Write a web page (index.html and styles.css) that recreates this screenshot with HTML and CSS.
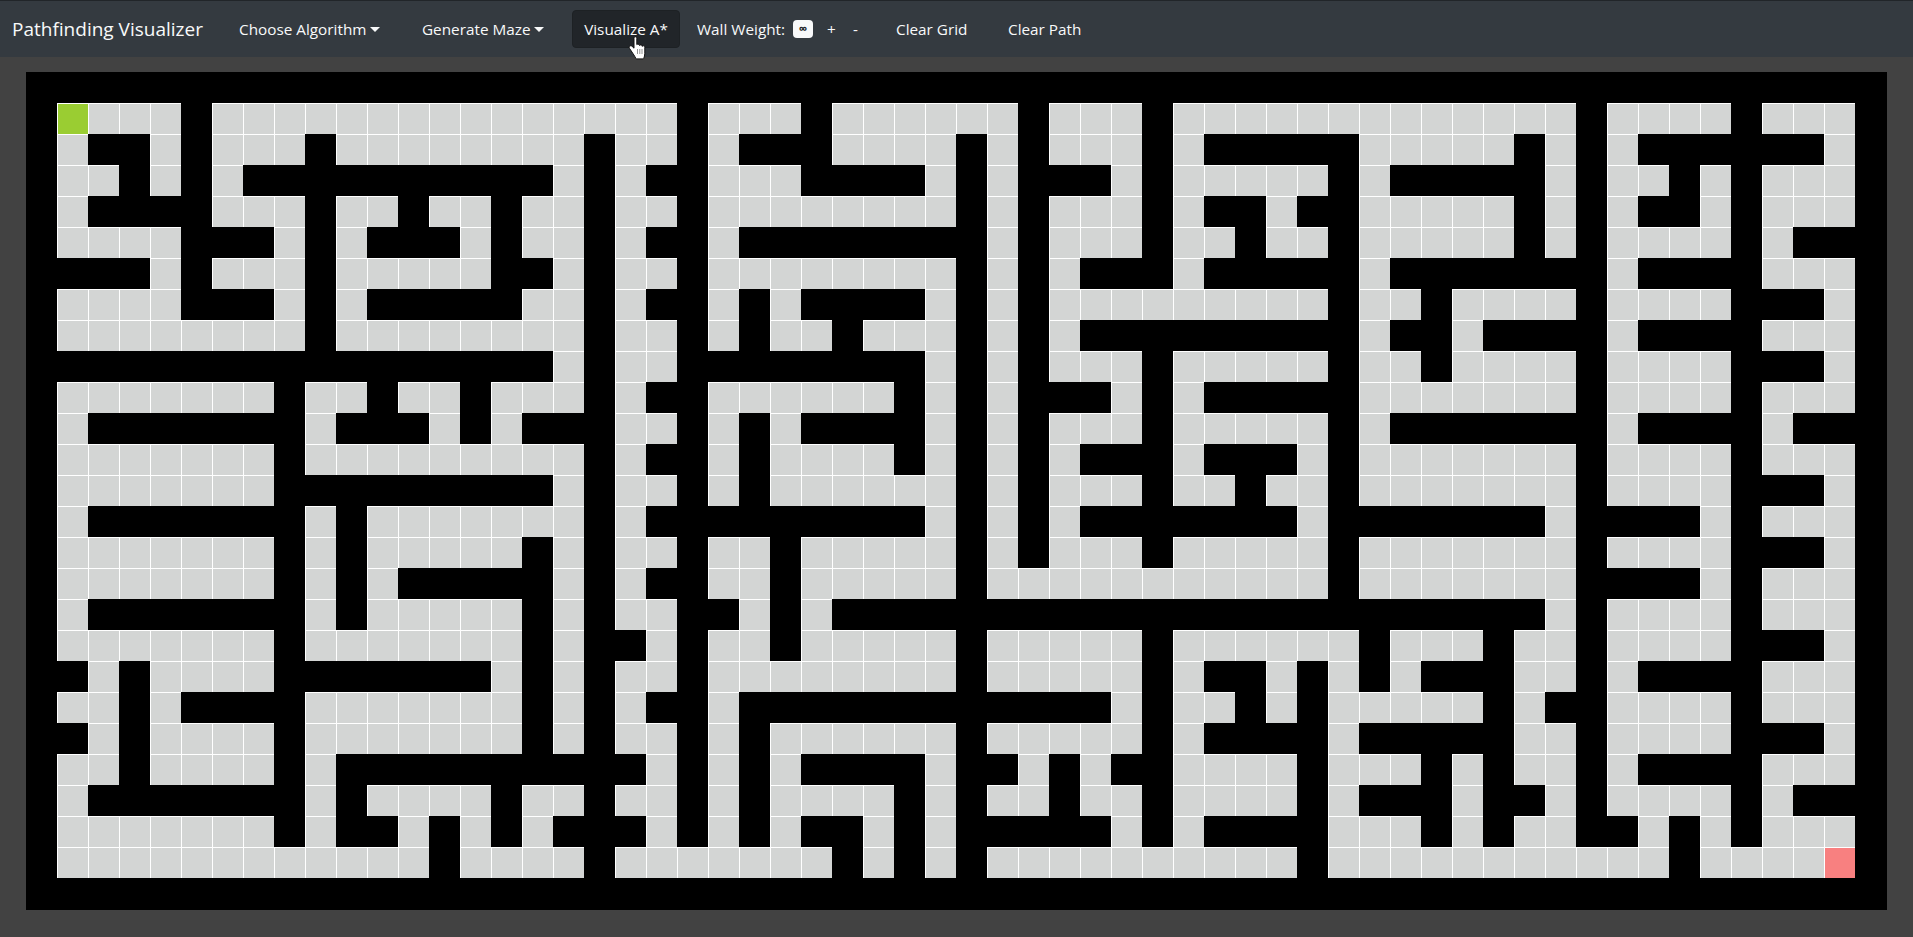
FILE: index.html
```html
<!DOCTYPE html>
<html lang="en">
<head>
    <meta charset="UTF-8">
    <meta name="viewport" content="width=device-width, initial-scale=1.0">
    <title>Pathfinding Visualizer</title>
    <link rel="stylesheet" href="styles.css">
</head>
<body>
    <nav class="navbar">
        <a class="brand" href="#">Pathfinding Visualizer</a>
        <a class="nav-link algo" href="#">Choose Algorithm<span class="caret"></span></a>
        <a class="nav-link maze" href="#">Generate Maze<span class="caret"></span></a>
        <button class="visualize">Visualize A*</button>
        <span class="nav-text weight">Wall Weight:</span>
        <span class="badge">∞</span>
        <a class="nav-link plus" href="#">+</a>
        <a class="nav-link minus" href="#">-</a>
        <a class="nav-link clear-grid" href="#">Clear Grid</a>
        <a class="nav-link clear-path" href="#">Clear Path</a>
    </nav>
    <svg class="pointer" width="18" height="24" viewBox="0 0 18 24">
        <path d="M7.5.7c-.9 0-1.5.7-1.5 1.6v9.9l-1.8-1.8c-.8-.8-1.9-.8-2.6-.1-.6.6-.5 1.5 0 2.2l3.6 5.4c1 1.6 2 3 2.6 4.4.1.4.4.6.8.6h6.4c.4 0 .7-.3.8-.6.5-1.4 1-3 1-5v-6c0-.9-.6-1.5-1.4-1.5-.5 0-.9.2-1.2.6 0-.9-.7-1.5-1.5-1.5-.5 0-1 .2-1.2.6-.1-.8-.7-1.4-1.5-1.4-.5 0-.9.2-1.2.5V2.3c0-.9-.6-1.6-1.5-1.6z" fill="#fff" stroke="#111" stroke-width="1"/>
        <path d="M9.5 13v5M11.8 13v5M14 13v5" fill="none" stroke="#666" stroke-width=".7"/>
    </svg>
    <main class="board">
        <div class="grid" id="grid"></div>
    </main>
    <script src="script.js"></script>
</body>
</html>
```

FILE: styles.css
```css
* {
    box-sizing: border-box;
}
html, body {
    height: 100%;
}
body {
    margin: 0;
    background-color: #424242;
    font-family: "Open Sans", "Noto Sans", sans-serif;
    font-size: 15.3px;
    overflow: hidden;
}
.navbar {
    display: flex;
    align-items: center;
    height: 57px;
    padding-left: 12px;
    background-color: #343a40;
    border-top: 1px solid #212529;
    color: #f8f9fa;
}
.navbar a {
    color: #f8f9fa;
    text-decoration: none;
    white-space: nowrap;
}
.brand {
    width: 227px;
    font-size: 19px;
}
.nav-link {
    display: block;
}
.algo {
    width: 183px;
}
.maze {
    width: 150px;
}
.caret {
    display: inline-block;
    margin-left: 4px;
    vertical-align: 3px;
    border-top: 5px solid #f8f9fa;
    border-right: 5px solid transparent;
    border-left: 5px solid transparent;
}
.visualize {
    width: 108px;
    height: 38px;
    padding: 0;
    font: inherit;
    color: #f8f9fa;
    background-color: #212529;
    border: 1px solid #1d2124;
    border-radius: 4px;
}
.weight {
    width: 96px;
    margin-left: 17px;
}
.badge {
    width: 20px;
    height: 18px;
    font-size: 12px;
    font-weight: 700;
    line-height: 18px;
    text-align: center;
    color: #212529;
    background-color: #f8f9fa;
    border-radius: 4px;
}
.plus {
    width: 26px;
    margin-left: 14px;
}
.minus {
    width: 43px;
}
.clear-grid {
    width: 112px;
}
.board {
    padding: 15px 26px 0;
}
.grid {
    display: grid;
    grid-template-columns: repeat(60, 31px);
    grid-auto-rows: 31px;
    width: 1861px;
    height: 838px;
    background-color: #000;
}
.cell {
    background-color: #d3d5d4;
    border-top: 1px solid #fff;
    border-left: 1px solid #fff;
}
.wall {
    background-color: #000;
    border: none;
}
.start {
    background-color: #9acd32;
}
.finish {
    background-color: #f88080;
}
.pointer {
    position: absolute;
    top: 36px;
    left: 628px;
}
```

FILE: script.js
```js
var COLS = 60;
var ROWS = 27;

// wall columns for rows 1 to 25, outer ring is always wall
var walls = [
    "5,21,25,32,36,50,55",
    "2-3,5,9,18,21,23-25,30,32,36,38-42,48,50,52-57",
    "3,5,7-16,18,20-21,25-28,30,32-34,36,42,44-48,50,53,55",
    "2-5,9,12,15,18,21,30,32,36,38-39,41-42,48,50,52-53,55",
    "5-7,9,11-13,15,18,20-21,23-30,32,36,39,42,48,50,55,57-58",
    "1-3,5,9,15-16,18,21,30,32,34-36,38-42,44-50,52-55",
    "5-7,9,11-15,18,20-21,23,25-28,30,32,42,45,50,55-57",
    "9,18,21,23,26,30,32,34-42,44-45,47-50,52-55",
    "1-16,18,21-28,30,32,36,42,45,50,55-57",
    "8,11,14,18,20-21,28,30,32-34,36,38-42,50,55",
    "2-8,10-12,14,16-18,21,23,25-28,30,32,36,42,44-50,52-55,57-58",
    "8,18,20-21,23,28,30,32,34-36,38-40,42,50,55",
    "8-16,18,21,23,30,32,36,39,42,50,55-57",
    "2-8,10,18,20-28,30,32,34-40,42-48,50-53,55",
    "8,10,16,18,21,24,30,32,36,42,50,55-57",
    "8,10,12-16,18,20-21,24,30,42,50-53,55",
    "2-8,10,16,18,21-22,24,26-48,50,55",
    "8,16,18-19,21,24,30,36,43,47,50,55-57",
    "1,3,8-14,16,18,21,30,36,38-39,41,43,45-47,50,52-55",
    "3,5-8,16,18,20-21,23-34,36,39,41,47,49-50,55",
    "1,3,8,16,18,21,23,30,36,38-41,43-47,50,55-57",
    "3,8,10-19,21,23,25-28,30-31,33,35-36,41,45,47,50,52-55",
    "2-8,10,15,18,21,23,28,30,33,36,41,43-45,47-48,50,55,57-58",
    "8,10-11,13,15,17-19,21,23,25-26,28,30-34,36,38-41,45,47,50-51,53,55",
    "13,18,26,28,30,41,53"
];

function parseWalls(text) {
    var cols = {};
    text.split(",").forEach(function (part) {
        var ends = part.split("-");
        var from = parseInt(ends[0]);
        var to = parseInt(ends[ends.length - 1]);
        for (var c = from; c <= to; c++) {
            cols[c] = true;
        }
    });
    return cols;
}

var grid = document.getElementById("grid");
for (var r = 0; r < ROWS; r++) {
    var rowWalls = r > 0 && r < ROWS - 1 ? parseWalls(walls[r - 1]) : null;
    for (var c = 0; c < COLS; c++) {
        var cell = document.createElement("div");
        cell.className = "cell";
        if (!rowWalls || c === 0 || c === COLS - 1 || rowWalls[c]) {
            cell.className += " wall";
        } else if (r === 1 && c === 1) {
            cell.className += " start";
        } else if (r === 25 && c === 58) {
            cell.className += " finish";
        }
        grid.appendChild(cell);
    }
}
```
